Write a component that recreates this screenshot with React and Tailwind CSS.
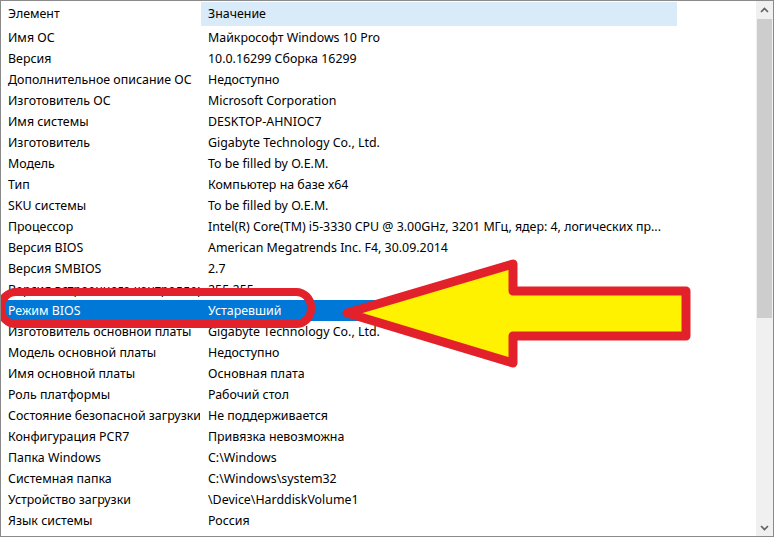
import React from "react";

const rows = [
  ["Имя ОС", "Майкрософт Windows 10 Pro"],
  ["Версия", "10.0.16299 Сборка 16299"],
  ["Дополнительное описание ОС", "Недоступно"],
  ["Изготовитель ОС", "Microsoft Corporation"],
  ["Имя системы", "DESKTOP-AHNIOC7"],
  ["Изготовитель", "Gigabyte Technology Co., Ltd."],
  ["Модель", "To be filled by O.E.M."],
  ["Тип", "Компьютер на базе x64"],
  ["SKU системы", "To be filled by O.E.M."],
  ["Процессор", "Intel(R) Core(TM) i5-3330 CPU @ 3.00GHz, 3201 МГц, ядер: 4, логических пр..."],
  ["Версия BIOS", "American Megatrends Inc. F4, 30.09.2014"],
  ["Версия SMBIOS", "2.7"],
  ["Версия встроенного контроллера", "255.255"],
  ["Режим BIOS", "Устаревший"],
  ["Изготовитель основной платы", "Gigabyte Technology Co., Ltd."],
  ["Модель основной платы", "Недоступно"],
  ["Имя основной платы", "Основная плата"],
  ["Роль платформы", "Рабочий стол"],
  ["Состояние безопасной загрузки", "Не поддерживается"],
  ["Конфигурация PCR7", "Привязка невозможна"],
  ["Папка Windows", "C:\\Windows"],
  ["Системная папка", "C:\\Windows\\system32"],
  ["Устройство загрузки", "\\Device\\HarddiskVolume1"],
  ["Язык системы", "Россия"],
];

export default function App() {
  return (
    <div
      className="relative w-[774px] h-[537px] bg-white border border-[#8a8a8a] flex overflow-hidden text-[12.4px] text-black"
      style={{ fontFamily: '"Noto Sans", "Open Sans", sans-serif' }}
    >
      <div className="flex-1 flex flex-col">
        <div className="h-[26px] flex">
          <div className="w-[200px] pl-[7px] flex items-center">Элемент</div>
          <div className="w-[476px] pt-[1px]">
            <div className="h-[24px] bg-[#d9ebf9] pl-[7px] flex items-center">Значение</div>
          </div>
        </div>
        {rows.map(([k, v], i) => {
          const sel = i === 13;
          return (
            <div
              key={i}
              className={
                sel
                  ? "h-[21px] w-[676px] flex bg-[#0078d7] text-white"
                  : "h-[21px] w-[676px] flex"
              }
            >
              <div className="w-[199px] pl-[7px] pt-[1px] flex items-center whitespace-nowrap overflow-hidden">{k}</div>
              <div className="w-[477px] pl-[8px] pt-[1px] flex items-center whitespace-nowrap overflow-hidden">{v}</div>
            </div>
          );
        })}
      </div>
      <div className="w-[17px] flex flex-col bg-[#f0f0f0]">
        <div className="h-[18px] flex items-center justify-center bg-[#f0f0f0]">
          <svg width="9" height="6" viewBox="0 0 9 6">
            <path d="M1 5 L4.5 1.5 L8 5" fill="none" stroke="#606060" strokeWidth="1.6" />
          </svg>
        </div>
        <div className="h-[299px] mx-[1px] bg-[#cdcdcd]" />
        <div className="flex-1" />
        <div className="h-[17px] flex items-center justify-center">
          <svg width="9" height="6" viewBox="0 0 9 6">
            <path d="M1 1 L4.5 4.5 L8 1" fill="none" stroke="#606060" strokeWidth="1.6" />
          </svg>
        </div>
      </div>
      <svg
        className="absolute left-[-1px] top-[-1px] pointer-events-none"
        width="774"
        height="537"
        viewBox="0 0 774 537"
      >
        <rect x="1" y="292" width="310" height="32" rx="15" fill="none" stroke="#e3212a" strokeWidth="8" />
        <polygon
          points="347,313 513,264 513,291 686,291 686,336 513,336 513,363"
          fill="#fff200"
          stroke="#e3212a"
          strokeWidth="9"
          strokeLinejoin="round"
        />
      </svg>
    </div>
  );
}
